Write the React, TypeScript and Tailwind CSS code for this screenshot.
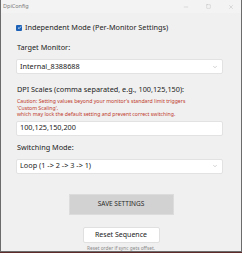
import React from 'react';
import { ChevronDown, Minus, Square, X } from 'lucide-react';

const FONT = { fontFamily: '"Noto Sans", "Open Sans", sans-serif' };

function SelectBox({ value }: { value: string }) {
  return (
    <div className="flex items-center justify-between h-[15px] w-[207px] bg-white border border-[#e2e2e2] rounded-[2px] pl-[3px] pr-[4px]">
      <span className="text-[7.3px] text-[#222] leading-none">{value}</span>
      <ChevronDown size={6} strokeWidth={1.5} className="text-[#8a8a8a]" />
    </div>
  );
}

export default function App() {
  return (
    <div className="w-[242px] h-[253px] bg-[#5e2a2a] overflow-hidden" style={FONT}>
      <div className="w-[242px] h-[252px] bg-[#6b6b6b] pl-px pr-px pb-px">
        <div className="flex flex-col h-full bg-[#f0f0f0]">
          {/* title bar */}
          <div className="flex items-center h-[13px] pl-[2px] bg-[#f3f3f3]">
            <span className="text-[5.5px] text-[#7a7a7a] leading-none">DpiConfig</span>
            <div className="ml-auto flex items-center gap-[17px] pr-[7px] text-[#8a8a8a]">
              <Minus size={6} strokeWidth={1} />
              <Square size={5} strokeWidth={1} />
              <X size={6} strokeWidth={1} />
            </div>
          </div>

          <div className="flex flex-col pl-[15px]">
            <label className="flex items-center gap-[3px] mt-[11px] h-[7px]">
              <span className="w-[6px] h-[6px] rounded-[1px] bg-[#1c62b9] flex items-center justify-center">
                <svg width="5" height="5" viewBox="0 0 10 10">
                  <path d="M2 5.2 L4.2 7.3 L8 2.8" fill="none" stroke="white" strokeWidth="1.6" />
                </svg>
              </span>
              <span className="text-[7.3px] text-[#222] leading-none">Independent Mode (Per-Monitor Settings)</span>
            </label>

            <div className="mt-[13px] h-[7px] flex items-center text-[7.3px] text-[#222] leading-none pl-px">Target Monitor:</div>
            <div className="mt-[8px]">
              <SelectBox value="Internal_8388688" />
            </div>

            <div className="mt-[12px] h-[7px] flex items-center text-[7.3px] text-[#222] leading-none pl-px">
              DPI Scales (comma separated, e.g., 100,125,150):
            </div>
            <div className="mt-[5px] pl-px text-[5.2px] leading-[6.5px] text-[#c0392b]">
              <div>Caution: Setting values beyond your monitor's standard limit triggers</div>
              <div>'Custom Scaling',</div>
              <div>which may lock the default setting and prevent correct switching.</div>
            </div>
            <div className="mt-[3px] flex items-center h-[15px] w-[207px] bg-white border border-[#e2e2e2] rounded-[2px] pl-[3px]">
              <span className="text-[7.3px] text-[#222] leading-none">100,125,150,200</span>
            </div>

            <div className="mt-[9px] h-[7px] flex items-center text-[7.3px] text-[#222] leading-none pl-px">Switching Mode:</div>
            <div className="mt-[7px]">
              <SelectBox value="Loop (1 -> 2 -> 3 -> 1)" />
            </div>
          </div>

          <div className="flex flex-col items-center">
            <button className="mt-[20px] w-[105px] h-[21px] bg-[#d2d2d2] border border-[#dcdcdc] text-[6.5px] text-[#2a2a2a] leading-none">
              SAVE SETTINGS
            </button>
            <button className="mt-[12px] w-[77px] h-[16px] bg-white border border-[#e0e0e0] rounded-[2px] text-[7px] text-[#222] leading-none">
              Reset Sequence
            </button>
            <div className="mt-[3px] text-[4.8px] text-[#8a8a8a] leading-none">Reset order if sync gets offset.</div>
          </div>
        </div>
      </div>
    </div>
  );
}
